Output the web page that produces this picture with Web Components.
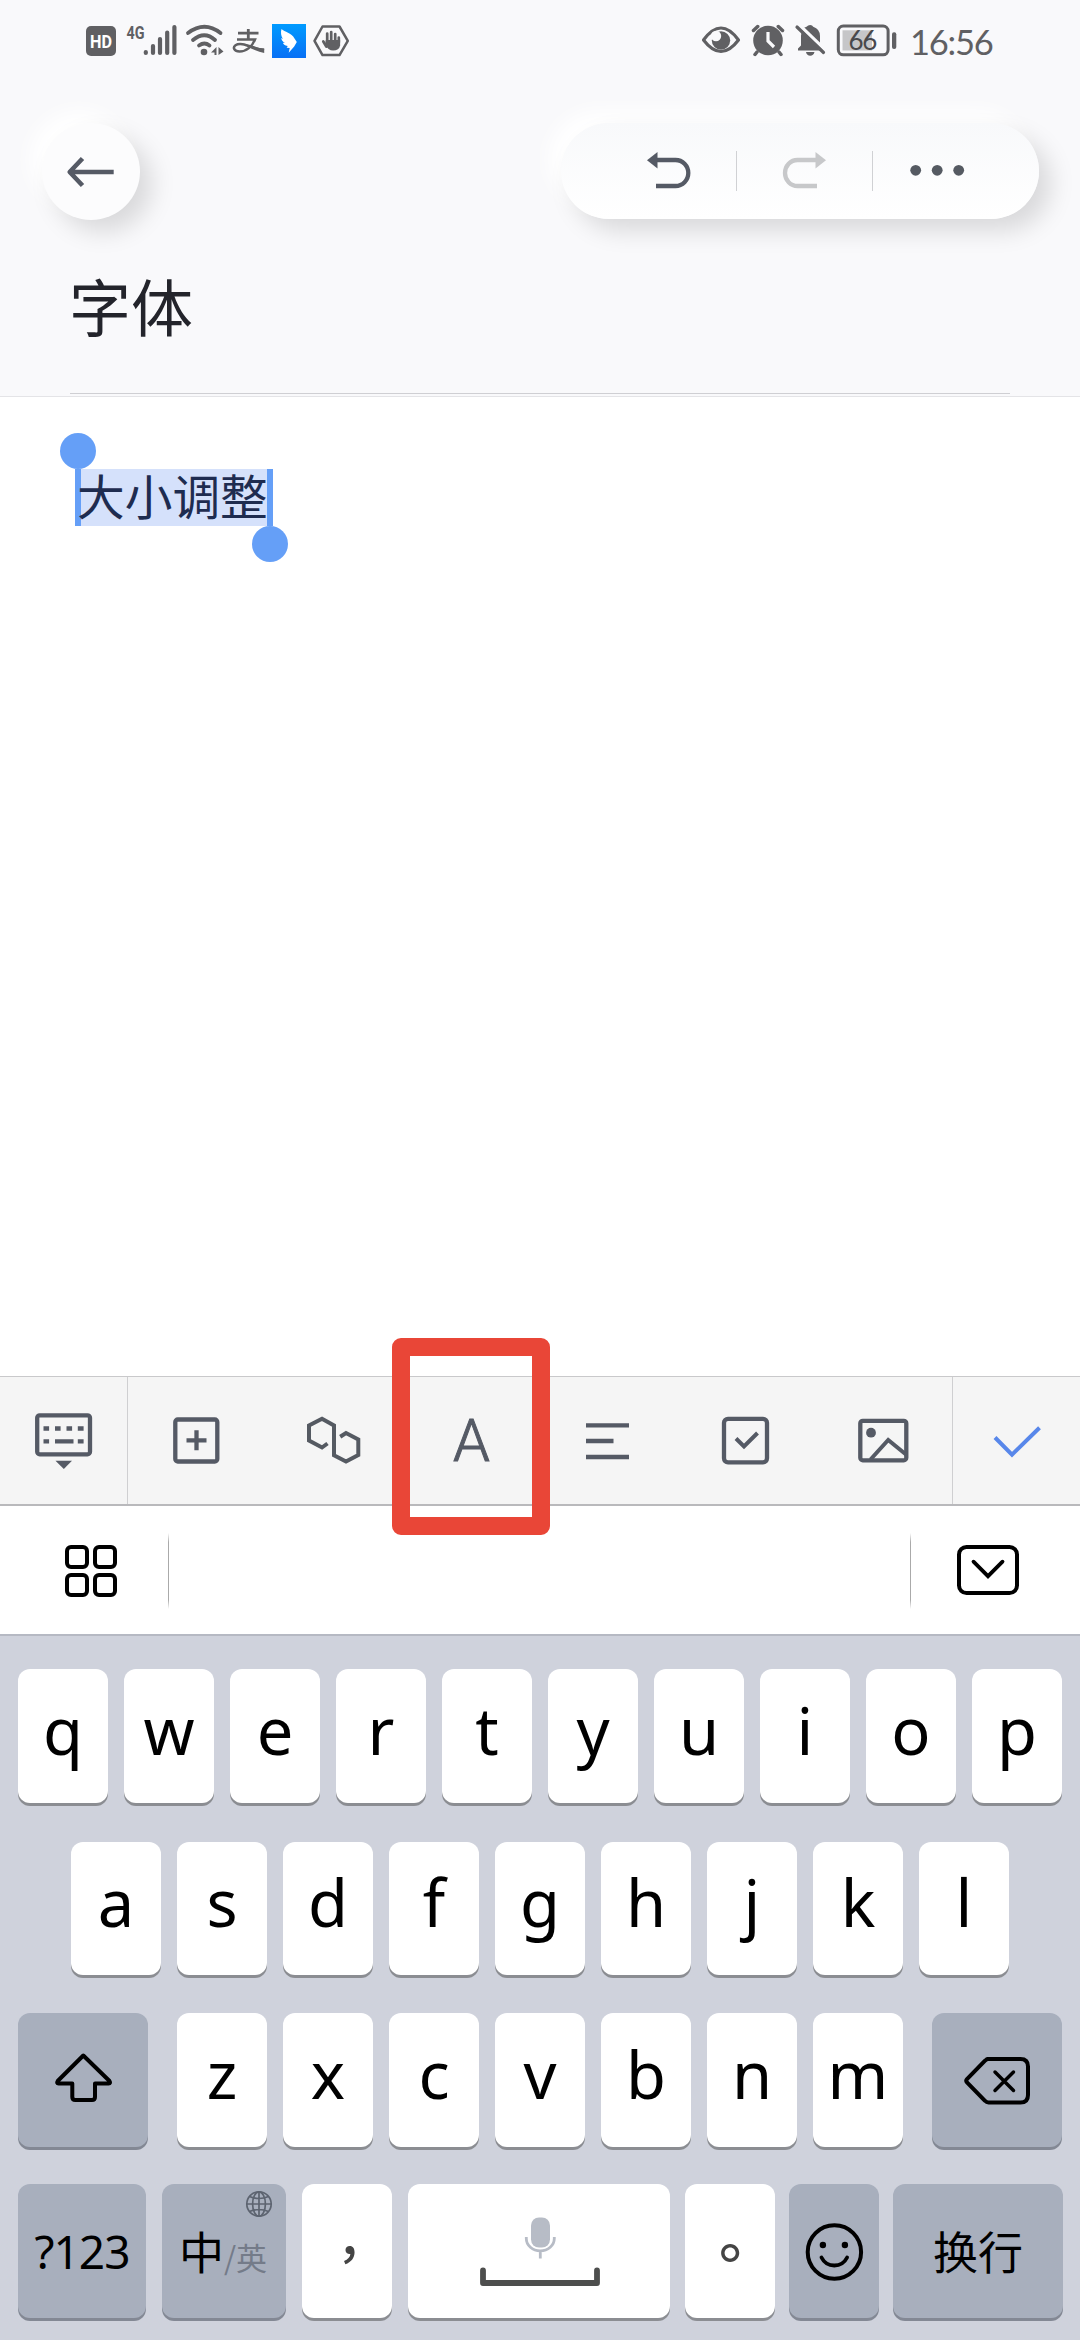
<!DOCTYPE html>
<html lang="zh-CN">
<head>
<meta charset="utf-8">
<title>字体</title>
<style>
html,body{margin:0;padding:0}
body{width:1080px;height:2340px;overflow:hidden;background:#fff;font-family:"Noto Sans","Noto Sans CJK SC",sans-serif}
</style>
</head>
<body>
<note-app></note-app>
<script>
const define = (name, html) => {
  const t = document.createElement('template');
  t.innerHTML = '<style>*{box-sizing:border-box}svg{display:block;flex:none;overflow:visible}</style>' + html;
  customElements.define(name, class extends HTMLElement {
    constructor() {
      super();
      this.attachShadow({ mode: 'open' }).appendChild(t.content.cloneNode(true));
    }
  });
};
// Icon sheet cell: the viewBox is expressed in screen coordinates.
const icon = (x, y, w, h, body, attrs = '') =>
  `<svg width="${w}" height="${h}" viewBox="${x} ${y} ${w} ${h}" fill="none" ${attrs}>${body}</svg>`;

define('status-bar', `
<style>
:host{display:flex;justify-content:space-between;height:80px;padding:20px 86px 0 80px;color:#606063}
.group{display:flex;height:42px}
.time{font:400 34.5px/42px Lato,sans-serif;letter-spacing:-1.2px;width:84px;white-space:nowrap;padding-top:1px}
text{fill:currentColor}
</style>
<div class="group">
${icon(80,20,43,42,`<rect x="86" y="26" width="30" height="30" rx="5" fill="#606063"/><text x="101" y="47.6" text-anchor="middle" textLength="22" lengthAdjust="spacingAndGlyphs" style="fill:#fff;font:700 18px Roboto">HD</text>`)}
${icon(123,20,62,42,`<text x="126.5" y="38.5" textLength="18" lengthAdjust="spacingAndGlyphs" style="font:700 19px Roboto">4G</text><path d="M145.8 52v1M153 46v7M160 39v14M167.2 32.5v20.5M174.4 27v26" stroke="#606063" stroke-width="4.2" stroke-linecap="round"/>`)}
${icon(185,20,43,42,`<g stroke="#606063" stroke-width="3.8" stroke-linecap="round"><path d="M188 33Q204.5 20.5 220.500 33M193 40Q204.5 30.3 215 40M199 45.500Q204.5 41.500 209.500 45.500"/></g><circle cx="204" cy="52" r="3.3" fill="#606063"/><path d="M216.5 47v8h-2v-2.5h-3.5zM218.5 47l5 4.5-5 3.5z" fill="#606063"/>`)}
${icon(228,20,40,42,`<path d="M238 33.200h20.500M248.300 29v11" stroke="#606063" stroke-width="2.800"/><path d="M237 39.500h18C252 47 246 51.500 239.500 51.500C234 51.500 232.500 47.500 235.500 45.200C241 41.500 250 47 264 50.500" stroke="#606063" stroke-width="2.500"/><path d="M247 44.500Q257 48.500 264.200 48.300V53Q257 51.500 247 46.500Z" fill="#606063"/>`)}
${icon(268,20,42,42,`<defs><linearGradient id="b" x2="0" y2="1"><stop stop-color="#009bff"/><stop offset="1" stop-color="#0870f5"/></linearGradient></defs><path d="M272 24h34v34h-34z" fill="url(#b)"/><path d="M281.500 29c3 3 10 3.500 13 9.500l2.300 3.500-2.600 4.500-5.500 6.300 1-4.800-3-.2 1-1.800c-3 0-4.500-2-4.800-3.200l2 .3c-2.600-1.800-3.500-3.500-3.700-5l1.700.8c-1.800-2.600-2.500-6.500-1.400-9.900z" fill="#fff"/>`)}
${icon(310,20,42,42,`<path d="M322.500 26.500h17l8.300 14.300-8.300 14.300h-17l-8-14.300z" stroke="#606063" stroke-width="2.5" stroke-linejoin="round"/><path d="M327.200 42v-8.500M331.200 42V32M335.200 42V34M323.300 41.500l3 5M338.800 42.500v-5" stroke="#606063" stroke-width="2.700" stroke-linecap="round"/><path d="M325.800 40h14.300v5.500q-1 5-7 5-5 0-8-6z" fill="#606063"/>`)}
</div>
<div class="group">
${icon(700,20,48,42,`<path d="M704.500 40Q722 16 739.500 40Q722 63 704.500 40z" stroke="#606063" stroke-width="3.2" stroke-linejoin="round"/><circle cx="722" cy="40.500" r="9.200" fill="#606063"/><circle cx="717" cy="36" r="5.200" fill="#f9f9fb"/>`)}
${icon(748,20,45,42,`<circle cx="769" cy="40.500" r="14.800" fill="#606063"/><path d="M754.500 30.500l4.200-4M783.500 30.500l-4.200-4M758 52l-2 2.500M780 52l2 2.500" stroke="#606063" stroke-width="3.500" stroke-linecap="round"/><path d="M769 32v9l6 6" stroke="#f9f9fb" stroke-width="3.200"/>`)}
${icon(793,20,41,42,`<path d="M799 50.500V48.500l3-3V36q0-8 5.500-9.300Q809 25 811.200 25t3 1.700Q821 29 821 36v9l3.500 5.500z" fill="#606063"/><path d="M807 52h8.500q-1 3.800-4.300 3.800T807 52z" fill="#606063"/><path d="M800 24.800l27.500 26.500" stroke="#f9f9fb" stroke-width="3.500"/><path d="M798 27l26.500 25.500" stroke="#606063" stroke-width="3.200" stroke-linecap="round"/>`)}
${icon(834,20,77,42,`<rect x="839.300" y="26" width="49.800" height="28.800" rx="5" stroke="#606063" stroke-width="3"/><path d="M843.500 30.300H873V50.500H843.500z" fill="#c6c6c8"/><rect x="893" y="32.300" width="4.300" height="16.700" rx="2" fill="#606063"/><text x="863.200" y="50.300" text-anchor="middle" style="font:400 26px Lato;letter-spacing:-1.500px;fill:#48484b">66</text>`)}
<div class="time">16:56</div>
</div>`);

define('round-button', `
<style>:host{display:flex;align-items:center;justify-content:center;width:98px;height:97px;border-radius:50%;background:#fcfcfd;box-shadow:12px 12px 24px rgba(0,0,0,.13),-12px -12px 20px #fff}</style><slot></slot>`);

define('action-pill', `
<style>
:host{display:flex;align-items:center;width:478px;height:96px;border-radius:48px;background:linear-gradient(#f8f9fb,#fff);box-shadow:12px 12px 24px rgba(0,0,0,.13),-12px -12px 20px #fff}
.cell{height:96px;display:flex;align-items:center;justify-content:center}
i{width:1px;height:40px;background:#d0d1d4}
</style>
<div class="cell" style="width:175px">${icon(561,123,174,96,`<path d="M654 160h20.500a12.800 13 0 0 1 0 26H655" stroke="#555a65" stroke-width="4.300"/><path d="M646 160.300l10.500-8.300v16.500z" fill="#555a65"/>`)}</div><i></i>
<div class="cell" style="width:135px">${icon(736,123,135,96,`<path d="M817 160h-20.500a12.500 13 0 0 0 0 26H816" stroke="#c7c8ca" stroke-width="4.300"/><path d="M825 160.300l-10.500-8.300v16.500z" fill="#c7c8ca"/>`)}</div><i></i>
<div class="cell">${icon(872,123,166,96,`<g fill="#555a62"><circle cx="914.700" cy="170.300" r="5.400"/><circle cx="936.200" cy="170.300" r="5.400"/><circle cx="957.700" cy="170.300" r="5.400"/></g>`)}</div>`);

define('note-header', `
<style>
:host{display:block;height:397px;background:#f9f9fb;border-bottom:1px solid #e4e4e7}
nav{display:flex;justify-content:space-between;padding:43px 41px 0 42px;height:184px}
.title{margin:0 70px;height:130px;border-bottom:1px solid #cfcfd3;font:400 62px/82px "Noto Sans CJK SC",sans-serif;color:#23242b;text-indent:-1px}
</style>
<status-bar></status-bar>
<nav><round-button>${icon(67,155,48,34,`<path d="M70 172h43.700M82.500 158.500L69.700 172l12.800 13.500" stroke="#555a65" stroke-width="4.600" stroke-linecap="butt" stroke-linejoin="round"/>`)}</round-button><action-pill></action-pill></nav>
<div class="title">字体</div>`);

define('text-selection', `
<style>
:host{display:inline-block;position:relative;width:198px;height:57px;border:solid #659ff7;border-width:0 6px;background:#d5e1fb;color:#1e2c50;font:400 47.700px/57px "Noto Sans CJK SC",sans-serif;white-space:nowrap}
.h{position:absolute;width:36px;height:36px;border-radius:50%;background:#659ff7}
.a{left:-21px;top:-36px}.z{right:-21px;top:57px}
span{display:block;margin:-3px 0 0 -4px}
</style><span><slot></slot></span><div class="h a"></div><div class="h z"></div>`);

define('tool-item', `<style>:host{display:flex;align-items:center;justify-content:center;height:127px;position:relative;flex:none}</style><slot></slot>`);

define('edit-toolbar', `
<style>
:host{display:flex;height:130px;background:#f5f5f5;border-top:1px solid #c9c9cb;border-bottom:2px solid #b9b9bc}
.l{border-right:1px solid #cfcfd1}.r{border-left:1px solid #cfcfd1}
.a{font:300 59px/127px Roboto,sans-serif;color:#555a65;height:127px;-webkit-text-stroke:1px #555a65}
.mark{position:absolute;left:-1px;top:-39px;width:158px;height:197px;border:18px solid #e94637;border-radius:9px}
</style>
<tool-item class="l" style="width:128px">${icon(0,1377,127,127,`<rect x="37.200" y="1415.300" width="52.800" height="39" rx="2.500" stroke="#555a65" stroke-width="4.300"/><path d="M43.500 1428.500h5.600M55 1428.500h5.600M66.500 1428.500h5.600M77.800 1428.500h5.800M43.500 1441.300h5.600M55 1441.300h18.500M77.800 1441.300h5.800" stroke="#555a65" stroke-width="4.300"/><path d="M55.500 1460.700h16.500l-8.200 8.300z" fill="#555a65"/>`)}</tool-item>
<tool-item style="width:137px">${icon(128,1377,137,127,`<rect x="175.300" y="1419.500" width="42" height="42" rx="2.500" stroke="#555a65" stroke-width="4.300"/><path d="M186.500 1440.300h20M196.500 1430.300v20" stroke="#555a65" stroke-width="4.300"/>`)}</tool-item>
<tool-item style="width:128px">${icon(265,1377,128,127,`<path d="M327.500 1443.500l-5.500 4-13-7v-15l13-6.700 12 6.700v29.800l12 6.200 12.300-6.500v-15.500l-12.300-6.500-5.800 3.700" stroke="#555a62" stroke-width="4"/>`)}</tool-item>
<tool-item style="width:157px"><div class="a">A</div><div class="mark"></div></tool-item>
<tool-item style="width:125px">${icon(550,1377,125,127,`<path d="M586 1425.300h43M586 1441h27.500M586 1457h43" stroke="#555a65" stroke-width="4.300"/>`)}</tool-item>
<tool-item style="width:140px">${icon(675,1377,140,127,`<rect x="724" y="1418.800" width="43" height="43.500" rx="4" stroke="#555a65" stroke-width="4.300"/><path d="M736 1438.500l8 8 13.500-13.500" stroke="#555a65" stroke-width="4"/>`)}</tool-item>
<tool-item style="width:137px">${icon(815,1377,137,127,`<rect x="860.300" y="1420.800" width="46" height="39.500" rx="2.500" stroke="#555a65" stroke-width="4.300"/><circle cx="871" cy="1432.700" r="4.900" fill="#555a65"/><path d="M870.500 1459.500l17.700-19.500 17.800 14.500" stroke="#555a65" stroke-width="4"/>`)}</tool-item>
<tool-item class="r" style="width:128px">${icon(953,1377,127,127,`<path d="M995 1437.500l17 17.200 27.500-27" stroke="#5887ea" stroke-width="4"/>`)}</tool-item>`);

define('ime-bar', `
<style>:host{display:flex;height:128px;background:#fff;align-items:center}i{width:1px;height:76px;margin-top:2px;background:linear-gradient(transparent,#aaa 12%,#aaa 88%,transparent)}b{flex:1}</style>
${icon(0,1506,168,128,`<g stroke="#000" stroke-width="4"><rect x="67" y="1547" width="20" height="20" rx="4"/><rect x="95" y="1547" width="20" height="20" rx="4"/><rect x="67" y="1575" width="20" height="20" rx="4"/><rect x="95" y="1575" width="20" height="20" rx="4"/></g>`)}
<i></i><b></b><i></i>
${icon(911,1506,169,128,`<rect x="959" y="1547" width="58" height="46" rx="7.500" stroke="#000" stroke-width="4"/><path d="M973.500 1561.700l14.500 14.500 14.500-14.500" stroke="#000" stroke-width="3.800" stroke-linecap="round"/>`)}`);

define('key-cap', `
<style>
:host{display:flex;flex:none;align-items:center;justify-content:center;width:90px;height:134px;border-radius:12px;background:#fff;box-shadow:0 3px 0 #8b8d92;color:#000;font-size:65px;line-height:77px;padding-bottom:12px;position:relative;white-space:nowrap}
:host([dark]){background:#a8afbd;box-shadow:0 3px 0 #838894}
:host([art]){padding:0}
</style><slot></slot>`);

const letters = s => [...s].map(c => `<key-cap>${c}</key-cap>`).join('');
define('soft-keyboard', `
<style>
:host{display:block;height:706px;background:#cfd2dc;border-top:2px solid #b6b9c3;padding-top:33px}
.row{display:flex;gap:16px;height:134px;padding:0 18px;margin-bottom:39px}
.two{padding:0 71px;margin-bottom:37px;}
.two key-cap{height:133px}
.three{margin-bottom:37px}
.zh{font:400 45px/60px "Noto Sans CJK SC",sans-serif;margin-left:-2px}
.en{font:400 31px/40px "Noto Sans CJK SC",sans-serif;color:#747b89;margin:12px 0 0 0}
.globe{position:absolute;left:83px;top:6px}
.punct{font:500 58px/80px "Noto Sans CJK TC",sans-serif;color:#444}
.comma{font-size:50px;margin-left:5px}
.stop{margin-bottom:3px}
</style>
<div class="row">${letters('qwertyuiop')}</div>
<div class="row two">${letters('asdfghjkl')}</div>
<div class="row three">
<key-cap dark art style="width:130px;margin-right:13px">${icon(18,2013,130,134,`<path d="M83.300 2055.500L57.700 2081q-1.500 2.300 1 2.500H72.300V2097q0 3 3 3H92q3 0 3-3V2083.500h13.500q2.500-.2 1-2.500z" stroke="#000" stroke-width="4" stroke-linejoin="round"/>`)}</key-cap>
${letters('zxcvbnm')}
<key-cap dark art style="width:130px;margin-left:13px">${icon(932,2013,130,134,`<path d="M988.500 2059h32q7.500 0 7.500 7.500v28.500q0 7.500-7.500 7.500h-32q-2 0-3.500-1.700l-18-18.300q-1.500-1.700 0-3.400l18-18.400q1.500-1.700 3.500-1.700z" stroke="#000" stroke-width="4"/><path d="M995 2072l18.500 18.500M1013.500 2072l-18.500 18.500" stroke="#000" stroke-width="3.500" stroke-linecap="round"/>`)}</key-cap>
</div>
<div class="row">
<key-cap dark style="width:128px;font-size:46px;letter-spacing:-1px;line-height:56px;padding:0">?123</key-cap>
<key-cap dark art style="width:124px"><span class="zh">中</span><span class="en">/英</span><span class="globe">${icon(246,2191,28,28,`<g stroke="#5d6470" stroke-width="1.700"><circle cx="260" cy="2205" r="12.200"/><ellipse cx="260" cy="2205" rx="6.400" ry="12.200"/><path d="M248 2205h24M260 2193v24M250.500 2197.500q9.500 4 19 0M250.500 2212.500q9.500-4 19 0"/></g>`)}</span></key-cap>
<key-cap art><span class="punct comma">，</span></key-cap>
<key-cap art style="width:262px">${icon(408,2184,262,134,`<rect x="531" y="2217.500" width="19" height="30" rx="8" fill="#b7bcc6"/><path d="M526.300 2237v1.500a14 12.300 0 0 0 28 0V2237M540.300 2251v7.500" stroke="#b7bcc6" stroke-width="2.800"/><path d="M483 2270.500v12.500h114v-12.500" stroke="#4d4e4d" stroke-width="5.800" stroke-linecap="round" stroke-linejoin="round"/>`)}</key-cap>
<key-cap art style="margin-left:-1px"><span class="punct stop">。</span></key-cap>
<key-cap dark art style="margin-left:-2px">${icon(789,2184,90,134,`<circle cx="834.400" cy="2252" r="26.700" stroke="#000" stroke-width="4"/><circle cx="822.900" cy="2245" r="3.200" fill="#000"/><circle cx="844.900" cy="2245" r="3.200" fill="#000"/><path d="M821.500 2257.500q4 8 12.800 8t12.800-8" stroke="#000" stroke-width="3.800" stroke-linecap="round"/>`)}</key-cap>
<key-cap dark style="width:170px;margin-left:-2px;font:400 45px/60px 'Noto Sans CJK SC',sans-serif;padding:0">换行</key-cap>
</div>`);

define('note-app', `
<style>
:host{display:flex;flex-direction:column;width:1080px;height:2340px;background:#fff}
main{height:979px;padding:72px 75px 0;display:flex;align-items:flex-start;background:#fff}
</style>
<note-header></note-header>
<main><text-selection>大小调整</text-selection></main>
<edit-toolbar></edit-toolbar>
<ime-bar></ime-bar>
<soft-keyboard></soft-keyboard>`);
</script>
</body>
</html>
